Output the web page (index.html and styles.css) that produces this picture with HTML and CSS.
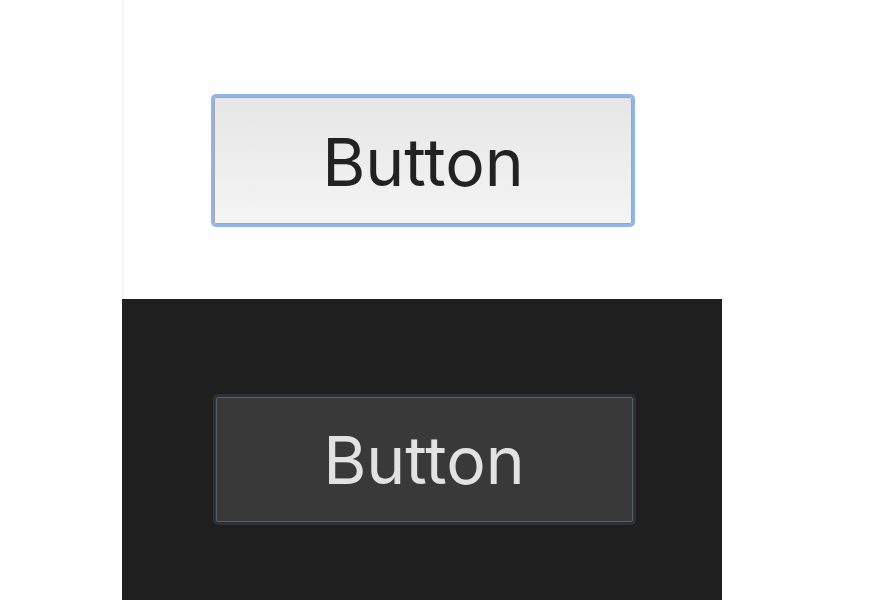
FILE: index.html
```html
<!DOCTYPE html>
<html>
<head>
<meta charset="utf-8">
<link rel="stylesheet" href="styles.css">
</head>
<body>
<div class="stage">
  <section class="panel light">
    <button class="btn btn-light">Button</button>
  </section>
  <section class="panel dark">
    <button class="btn btn-dark">Button</button>
  </section>
</div>
</body>
</html>
```

FILE: styles.css
```css
html, body {
  margin: 0;
  padding: 0;
  background: #ffffff;
}
.stage {
  margin-left: 122px;
  width: 600px;
  display: flex;
  flex-direction: column;
}
.panel {
  height: 299px;
  box-sizing: border-box;
  display: flex;
  justify-content: center;
  align-items: flex-start;
}
.light {
  background: #fefefe;
  border-left: 2px solid #f6f6f6;
  padding-top: 94px;
}
.dark {
  background: #1f1f1f;
  height: 301px;
  padding-top: 95px;
}
.btn {
  font-family: Inter, "Liberation Sans", sans-serif;
  font-size: 66px;
  line-height: 1;
  box-sizing: border-box;
  display: flex;
  align-items: center;
  justify-content: center;
  padding: 0;
  margin: 0;
}
.btn-light {
  width: 418px;
  height: 127px;
  margin-top: 3px;
  padding-top: 2px;
  color: #222222;
  background: linear-gradient(#e6e6e6, #f4f4f4);
  border: 1px solid #a6a6a6;
  border-radius: 2px;
  box-shadow: 0 0 0 3px #90b4ec;
}
.btn-dark {
  width: 417px;
  height: 125px;
  margin-top: 3px;
  margin-left: 4px;
  color: #e2e2e2;
  background: #393939;
  border: 1px solid #5b5f63;
  border-radius: 2px;
  box-shadow: 0 0 0 3px #2b323a;
}
```
